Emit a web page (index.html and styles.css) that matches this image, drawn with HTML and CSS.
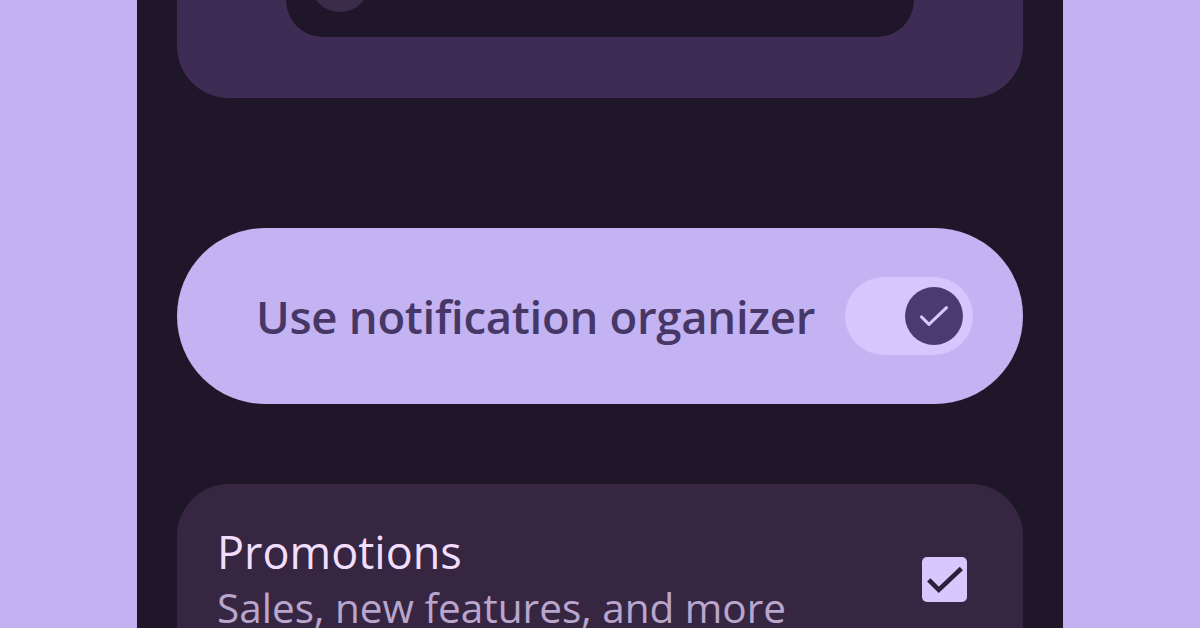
FILE: index.html
```html
<!DOCTYPE html>
<html>
<head>
  <meta charset="utf-8">
  <title>Notification organizer</title>
  <link rel="stylesheet" href="styles.css">
</head>
<body>
  <div class="phone">
    <div class="topcard">
      <div class="preview">
        <div class="dot"></div>
      </div>
    </div>

    <div class="organizer">
      <span class="label">Use notification organizer</span>
      <div class="switch">
        <div class="thumb">
          <svg width="40" height="40" viewBox="0 0 24 24"><path d="M4.5 12.5l4.5 4.5L19.5 7" fill="none" stroke="#d6c7ff" stroke-width="1.8" stroke-linecap="round" stroke-linejoin="round"/></svg>
        </div>
      </div>
    </div>

    <div class="category">
      <div class="text">
        <p class="title">Promotions</p>
        <p class="sub">Sales, new features, and more</p>
      </div>
      <div class="checkbox">
        <svg width="44" height="44" viewBox="0 0 24 24"><path d="M4 12.8l4.6 4.6L20 6.6" fill="none" stroke="#2c1f3a" stroke-width="2.5" stroke-linecap="square"/></svg>
      </div>
    </div>
  </div>
</body>
</html>
```

FILE: styles.css
```css
body, html{
  margin: 0;
  height: 100%;
  overflow: hidden;
  background-color: #c1b1f1;
  font-family: "Open Sans", "Noto Sans", sans-serif;
}
.phone{
  width: 846px;
  height: 628px;
  margin: 0 auto;
  padding: 0 40px;
  background-color: #1f1729;
  overflow: hidden;
}
.topcard{
  height: 98px;
  background-color: #3e2c54;
  border-radius: 0 0 52px 52px;
}
.preview{
  width: 628px;
  height: 37px;
  margin: 0 auto;
  background-color: #1f1729;
  border-radius: 0 0 55px 55px;
  display: flex;
  align-items: flex-end;
  padding-left: 24px;
  box-sizing: border-box;
}
.dot{
  width: 60px;
  height: 60px;
  margin-bottom: 25px;
  flex-shrink: 0;
  border-radius: 50%;
  background-color: #3a2b4a;
}
.organizer{
  margin-top: 130px;
  height: 176px;
  border-radius: 88px;
  background-color: #c3b3f3;
  display: flex;
  align-items: center;
  justify-content: space-between;
  padding: 0 50px 0 79px;
}
.label{
  font-size: 45.5px;
  font-weight: 600;
  color: #463767;
  letter-spacing: -0.3px;
}
.switch{
  width: 128px;
  height: 78px;
  border-radius: 39px;
  background-color: #d5c7fd;
  display: flex;
  align-items: center;
  justify-content: flex-end;
  padding-right: 10px;
  box-sizing: border-box;
}
.thumb{
  width: 58px;
  height: 58px;
  border-radius: 50%;
  background-color: #4a3a70;
  display: flex;
  align-items: center;
  justify-content: center;
}
.category{
  margin-top: 80px;
  height: 200px;
  border-radius: 52px 52px 0 0;
  background-color: #362642;
  display: flex;
  justify-content: space-between;
  align-items: flex-start;
  padding: 39px 56px 0 40px;
}
.category p{
  margin: 0;
  white-space: nowrap;
}
.title{
  font-size: 45px;
  line-height: 58px;
  color: #f1defc;
}
.sub{
  font-size: 40.5px;
  line-height: 54px;
  color: #baa6cd;
}
.checkbox{
  margin-top: 34px;
  width: 45px;
  height: 45px;
  border-radius: 5px;
  background-color: #d7c7fd;
  display: flex;
  align-items: center;
  justify-content: center;
}
```
